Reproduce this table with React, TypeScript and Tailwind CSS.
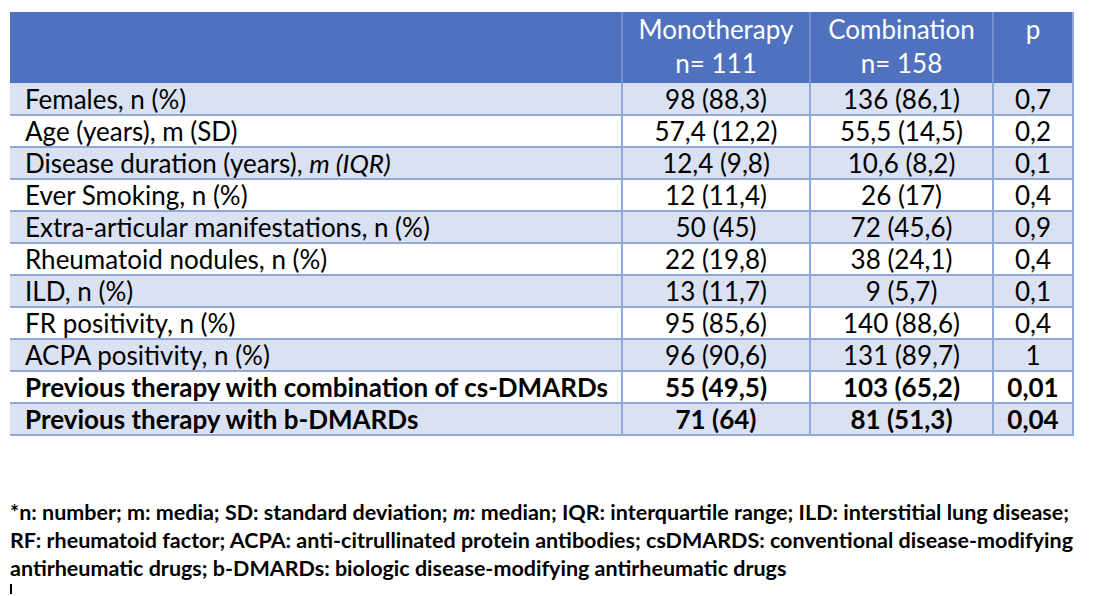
import React from "react";

type Row = { label: React.ReactNode; mono: string; combo: string; p: string; bold?: boolean };

const rows: Row[] = [
  { label: "Females, n (%)", mono: "98 (88,3)", combo: "136 (86,1)", p: "0,7" },
  { label: "Age (years), m (SD)", mono: "57,4 (12,2)", combo: "55,5 (14,5)", p: "0,2" },
  {
    label: (
      <>
        Disease duration (years), <i>m (IQR)</i>
      </>
    ),
    mono: "12,4 (9,8)",
    combo: "10,6 (8,2)",
    p: "0,1",
  },
  { label: "Ever Smoking, n (%)", mono: "12 (11,4)", combo: "26 (17)", p: "0,4" },
  { label: "Extra-articular manifestations, n (%)", mono: "50 (45)", combo: "72 (45,6)", p: "0,9" },
  { label: "Rheumatoid nodules, n (%)", mono: "22 (19,8)", combo: "38 (24,1)", p: "0,4" },
  { label: "ILD, n (%)", mono: "13 (11,7)", combo: "9 (5,7)", p: "0,1" },
  { label: "FR positivity, n (%)", mono: "95 (85,6)", combo: "140 (88,6)", p: "0,4" },
  { label: "ACPA positivity, n (%)", mono: "96 (90,6)", combo: "131 (89,7)", p: "1" },
  {
    label: "Previous therapy with combination of cs-DMARDs",
    mono: "55 (49,5)",
    combo: "103 (65,2)",
    p: "0,01",
    bold: true,
  },
  { label: "Previous therapy with b-DMARDs", mono: "71 (64)", combo: "81 (51,3)", p: "0,04", bold: true },
];

export default function App() {
  return (
    <div className="w-[1094px] h-[596px] bg-white text-black font-['Lato',sans-serif] overflow-hidden">
      <div className="pl-[10px] pt-[12px]">
        <table className="border-collapse text-[26px] leading-none">
          <colgroup>
            <col className="w-[612px]" />
            <col className="w-[188px]" />
            <col className="w-[183px]" />
            <col className="w-[80px]" />
          </colgroup>
          <thead>
            <tr className="bg-[#4f71be] text-white h-[71px] align-top">
              <th className="border-r-2 border-[#7391d0] font-normal" />
              <th className="border-r-2 border-[#7391d0] font-normal leading-[34px]">
                Monotherapy
                <br />
                n= 111
              </th>
              <th className="border-r-2 border-[#7391d0] font-normal leading-[34px]">
                Combination
                <br />
                n= 158
              </th>
              <th className="border-r-2 border-[#8eaadb] font-normal leading-[34px]">p</th>
            </tr>
          </thead>
          <tbody>
            {rows.map((r, i) => (
              <tr
                key={i}
                className={`h-[32px] border-b-2 border-[#8eaadb] ${i % 2 === 0 ? "bg-[#d9e1f2]" : "bg-white"} ${
                  r.bold ? "font-bold" : ""
                }`}
              >
                <td className="pl-[15px] border-r-2 border-[#8eaadb] whitespace-nowrap">{r.label}</td>
                <td className="text-center border-r-2 border-[#8eaadb]">{r.mono}</td>
                <td className="text-center border-r-2 border-[#8eaadb]">{r.combo}</td>
                <td className="text-center border-r-2 border-[#8eaadb]">{r.p}</td>
              </tr>
            ))}
          </tbody>
        </table>
      </div>
      <p className="mt-[62px] pl-[10px] text-[21.5px] leading-[28px] font-bold whitespace-nowrap">
        *n: number; m: media; SD: standard deviation; <i>m:</i> median; IQR: interquartile range; ILD: interstitial lung
        disease;
        <br />
        RF: rheumatoid factor; ACPA: anti-citrullinated protein antibodies; csDMARDS: conventional disease-modifying
        <br />
        antirheumatic drugs; b-DMARDs: biologic disease-modifying antirheumatic drugs
      </p>
      <div className="ml-[10px] mt-[2px] w-[2px] h-[10px] bg-black" />
    </div>
  );
}
